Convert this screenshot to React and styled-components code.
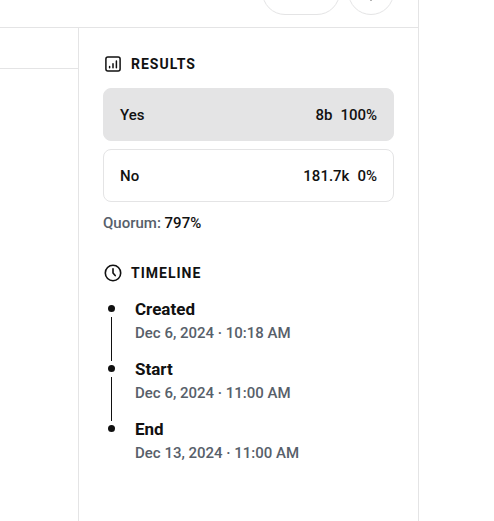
import styled, { createGlobalStyle } from "styled-components"

const GlobalStyle = createGlobalStyle`
    *{
        box-sizing: border-box;
    }
    body{
        margin: 0;
        background-color: #fff;
        color: #111;
        font-family: Roboto, "Liberation Sans", sans-serif;
        font-size: 15px;
        font-weight: 500;
        line-height: 24px;
    }
`

const Page = styled.div`
    display: flex;
    flex-direction: column;
    min-height: 100vh;
    margin-right: 75px;
    border-right: 1px solid #e4e4e5;
`

const TopBar = styled.header`
    display: flex;
    justify-content: flex-end;
    align-items: flex-end;
    gap: 8px;
    height: 28px;
    padding: 0 24px 12px;
    border-bottom: 1px solid #e4e4e5;
    overflow: hidden;
`

const PillButton = styled.button`
    display: flex;
    flex-shrink: 0;
    align-items: center;
    justify-content: center;
    width: ${props => props.$round ? '46px' : '78px'};
    height: 46px;
    padding: 0;
    border: 1px solid #e4e4e5;
    border-radius: 23px;
    background-color: #fff;
    color: #111;
    font: inherit;
    cursor: pointer;
`

const Columns = styled.div`
    display: flex;
    flex: 1;
`

const Main = styled.main`
    flex: 1;
`

const Tabs = styled.div`
    height: 41px;
    border-bottom: 1px solid #e4e4e5;
`

const Sidebar = styled.aside`
    width: 340px;
    padding: 24px;
    border-left: 1px solid #e4e4e5;
`

const Section = styled.section`
    & + &{
        margin-top: 26px;
    }
`

const SectionTitle = styled.h4`
    display: flex;
    align-items: center;
    gap: 8px;
    margin: 0 0 12px;
    font-size: 14px;
    font-weight: 700;
    letter-spacing: 1px;
    text-transform: uppercase;
`

const Choices = styled.ul`
    display: flex;
    flex-direction: column;
    gap: 8px;
    margin: 0 0 9px;
    padding: 0;
    list-style: none;
`

const Choice = styled.li`
    display: flex;
    align-items: center;
    gap: 8px;
    height: 53px;
    padding: 0 16px;
    border: 1px solid #e4e4e5;
    border-radius: 8px;
    background-color: ${props => props.$winner ? '#e4e4e5' : '#fff'};
    .name{
        flex: 1;
    }
`

const Quorum = styled.div`
    color: #57606a;
    span{
        color: #111;
    }
`

const Steps = styled.ol`
    margin: 0;
    padding: 0;
    list-style: none;
`

const Step = styled.li`
    display: flex;
    gap: 20px;
    padding-left: 5px;
    h4{
        margin: 0;
        font-size: 17px;
        font-weight: 700;
    }
    .date{
        color: #57606a;
    }
    .text{
        padding-bottom: 12px;
    }
`

const Marker = styled.div`
    display: flex;
    flex-direction: column;
    align-items: center;
    width: 7px;
    padding-top: 8px;
    .dot{
        width: 7px;
        height: 7px;
        border-radius: 50%;
        background-color: #111;
    }
    .line{
        flex: 1;
        width: 1px;
        margin: 5px 0 -4px;
        background-color: #111;
    }
`

const ChartIcon = () => (
    <svg width="20" height="20" viewBox="0 0 20 20" fill="none" stroke="currentColor" strokeWidth="1.5" strokeLinecap="round">
        <rect x="2.9" y="2.9" width="14.2" height="14.2" rx="2" />
        <path d="M6.6 12.5v1.3M10 9.8v4M13.4 6.9v6.9" />
    </svg>
)

const ClockIcon = () => (
    <svg width="20" height="20" viewBox="0 0 20 20" fill="none" stroke="currentColor" strokeWidth="1.6" strokeLinecap="round" strokeLinejoin="round">
        <circle cx="10" cy="10" r="7.7" />
        <path d="M10 5.8V10l2.2 2.6" />
    </svg>
)

const ChevronIcon = () => (
    <svg width="20" height="20" viewBox="0 0 20 20" fill="none" stroke="currentColor" strokeWidth="1.5">
        <path d="M5 2l5 5.5L15 2" />
    </svg>
)

const ThemeIcon = () => (
    <svg width="20" height="20" viewBox="0 0 20 20" fill="none" stroke="currentColor" strokeWidth="1.5" strokeLinecap="round">
        <circle cx="10" cy="10" r="3.2" />
        <path d="M10 2.2v1.4M10 16.4v1.4M2.2 10h1.4M16.4 10h1.4M4.5 4.5l1 1M14.5 14.5l1 1M4.5 15.5l1-1M14.5 5.5l1-1" />
    </svg>
)

const choices = [
    { name: 'Yes', votes: '8b', percent: 100 },
    { name: 'No', votes: '181.7k', percent: 0 },
]

const steps = [
    { title: 'Created', date: 'Dec 6, 2024 · 10:18 AM' },
    { title: 'Start', date: 'Dec 6, 2024 · 11:00 AM' },
    { title: 'End', date: 'Dec 13, 2024 · 11:00 AM' },
]

const App = () => {
    return (
        <>
            <GlobalStyle />
            <Page>
                <TopBar>
                    <PillButton aria-label="Account"><ChevronIcon /></PillButton>
                    <PillButton $round aria-label="Theme"><ThemeIcon /></PillButton>
                </TopBar>
                <Columns>
                    <Main>
                        <Tabs />
                    </Main>
                    <Sidebar>
                        <Section>
                            <SectionTitle><ChartIcon /> Results</SectionTitle>
                            <Choices>
                                {choices.map(choice =>
                                    <Choice key={choice.name} $winner={choice.percent > 50}>
                                        <span className='name'>{choice.name}</span>
                                        <span>{choice.votes}</span>
                                        <span>{choice.percent}%</span>
                                    </Choice>
                                )}
                            </Choices>
                            <Quorum>Quorum: <span>797%</span></Quorum>
                        </Section>
                        <Section>
                            <SectionTitle><ClockIcon /> Timeline</SectionTitle>
                            <Steps>
                                {steps.map((step, i) =>
                                    <Step key={step.title}>
                                        <Marker>
                                            <div className='dot' />
                                            {i < steps.length - 1 && <div className='line' />}
                                        </Marker>
                                        <div className='text'>
                                            <h4>{step.title}</h4>
                                            <div className='date'>{step.date}</div>
                                        </div>
                                    </Step>
                                )}
                            </Steps>
                        </Section>
                    </Sidebar>
                </Columns>
            </Page>
        </>
    )
}

export default App
